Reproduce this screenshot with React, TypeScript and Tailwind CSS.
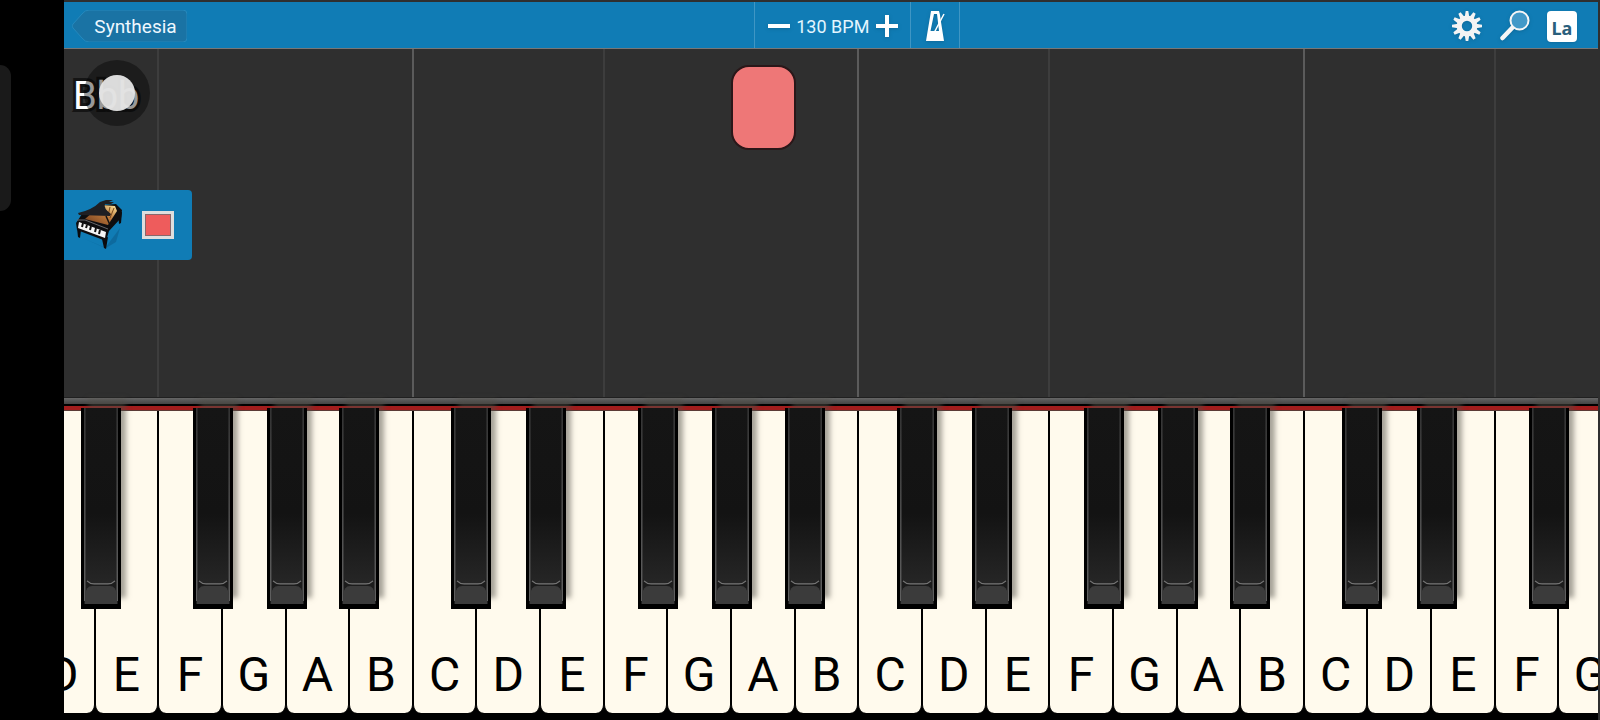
import React, { useState } from 'react';

interface KeyInfo {
  note: string;
  black?: string;
}

// position of the black key that overlaps the right edge of each white key
const BLACK: Record<string, string> = {
  C: '-right-[16px]',
  D: '-right-[27px]',
  F: '-right-[12px]',
  G: '-right-[22px]',
  A: '-right-[31px]',
};

const NOTES = 'DEFGABCDEFGABCDEFGABCDEFG'.split('');
const KEYS: KeyInfo[] = NOTES.map((note) => ({ note, black: BLACK[note] }));
const ACTIVE_KEY = 11;

const laneBorder: Record<string, string> = {
  B: 'border-r-2 border-[#5b5b5b]',
  E: 'border-r-2 border-[#3d3d3d]',
};

function MetronomeIcon() {
  return (
    <svg className="h-8 w-5 drop-shadow" viewBox="0 0 20 32">
      <path fill="#fff" fillRule="evenodd" d="M6 1h8l1 4 1 7 3 19H1L6 1zm3 3L5.500 21h8.500L12.500 8 12 4z" />
      <path stroke="#fff" strokeWidth="1.500" d="M9.500 22L19 4" />
    </svg>
  );
}

function GearIcon() {
  const teeth = Array.from({ length: 12 }, (_, i) => i * 30);
  return (
    <svg className="h-8 w-8 drop-shadow" viewBox="-16 -16 32 32">
      <circle r="7.800" fill="none" stroke="#f4f4f4" strokeWidth="5.200" />
      {teeth.map((angle) => (
        <path key={angle} d="M-2.300 -9L-1.300 -15H1.300L2.300 -9z" fill="#f4f4f4" transform={`rotate(${angle})`} />
      ))}
    </svg>
  );
}

function SearchIcon() {
  return (
    <svg className="h-8 w-8 drop-shadow" viewBox="0 0 32 32">
      <path d="M3.500 28L14 17" stroke="#f6f6f6" strokeWidth="4.500" strokeLinecap="round" />
      <circle cx="20.500" cy="10.500" r="9" fill="#4299c8" stroke="#f6f6f6" strokeWidth="2" />
    </svg>
  );
}

function PianoIcon() {
  return (
    <svg className="h-13 w-12" viewBox="0 0 48 52">
      <defs>
        <linearGradient id="wood" x1="0" y1="1" x2="1" y2="0">
          <stop offset="0" stopColor="#6e3a1c" />
          <stop offset="0.550" stopColor="#b9763a" />
          <stop offset="1" stopColor="#ffe9a0" />
        </linearGradient>
      </defs>
      <path d="M10 40l20 9 15-20-4 14-10 6z" fill="#0a4f7c" opacity="0.400" />
      <path d="M2 29l1 9 2 1 1-8zM27 40l2 9 2 1 2-12zM43 14l1 11 2-1 1-11z" fill="#0b0b0d" />
      <path d="M1 24L7 15 28 6 41 5 47 11 46 19 34 32 31 42 2 31z" fill="#0d0d0f" />
      <path d="M10 20L26 6 40 7 42 12 33 26z" fill="url(#wood)" />
      <path d="M35 8l-2 9M39 9l-4 10" stroke="#7a4a1e" strokeWidth="1" />
      <path d="M3 14Q17 11 25 3L31 1H38L34 3H39L36 5H30Q28 9 36 15L35 17 4 16z" fill="#1f1f23" />
      <path d="M31 17l4 9" stroke="#111" strokeWidth="1.500" />
      <path d="M4 23l27 10-1 6L3 29z" fill="#f5f5f5" />
      <path d="M8 24l-1 4M12 26l-1 3M16 27l-1 4M21 29l-1 4M25 31l-1 4" stroke="#111" strokeWidth="2" />
      <path d="M2 21L10 21 33 30" stroke="#66666a" strokeWidth="1" fill="none" />
    </svg>
  );
}

function BlackKey({ className }: { className: string }) {
  return (
    <span
      className={`absolute -top-[3px] z-10 h-[201px] w-10 bg-black shadow-[6px_-10px_5px_-1px_rgba(80,78,70,0.5)] ${className}`}
    >
      <svg className="block h-full w-full" viewBox="0 0 40 200" preserveAspectRatio="none">
        <defs>
          <linearGradient id="keyFace" x1="0" y1="0" x2="0" y2="1">
            <stop offset="0" stopColor="#151515" />
            <stop offset="0.600" stopColor="#131313" />
            <stop offset="1" stopColor="#262626" />
          </linearGradient>
          <linearGradient id="keyRim" x1="0" y1="0" x2="0" y2="1">
            <stop offset="0" stopColor="#333" />
            <stop offset="1" stopColor="#606060" />
          </linearGradient>
        </defs>
        <rect width="40" height="200" fill="#000" />
        <path d="M3 0H37V195H3z" fill="#1c1c1c" />
        <path d="M3 0H4.500V192H3zM35.500 0H37V192H35.500z" fill="url(#keyRim)" />
        <path d="M5 0H35V168Q35 175 29 175H11Q5 175 5 168z" fill="url(#keyFace)" />
        <path d="M4 195V186Q5 177 11 177H29Q35 177 36 186V195z" fill="#3b3b3b" />
        <path d="M6 172Q9 175 13 175H27Q31 175 34 172" stroke="#777" strokeWidth="1.200" fill="none" />
      </svg>
    </span>
  );
}

export default function App() {
  const [bpm, setBpm] = useState(130);

  return (
    <div className="flex h-screen overflow-hidden bg-black font-[Roboto,sans-serif]">
      <aside className="w-16 shrink-0 pt-[65px]">
        <div className="h-[146px] w-[11px] rounded-r-xl bg-[#1a1a1a]" />
      </aside>

      <main className="flex min-w-0 flex-1 flex-col overflow-hidden border-t-2 border-r-2 border-[#2f2f2f]">
        {/* Toolbar */}
        <header className="grid h-[47px] shrink-0 grid-cols-[45%_auto_1fr] border-b border-[#777] bg-[#107cb5] text-white">
          <div className="flex items-center pt-0.5 pl-2">
            <button type="button" className="relative h-8 w-[115px] pt-0.5 pl-3 text-[19px] leading-7 text-[#eef8ff]">
              <svg className="absolute inset-0 h-full w-full" viewBox="0 0 115 32" preserveAspectRatio="none">
                <path
                  d="M17 0H111Q115 0 115 4V28Q115 32 111 32H17Q13 32 10 28L1 18Q-1 16 1 14L10 4Q13 0 17 0z"
                  fill="#1a73a4"
                  stroke="#2589bd"
                />
              </svg>
              <span className="relative">Synthesia</span>
            </button>
          </div>

          <div className="flex border-x border-[#3f96c4]">
            <div className="flex w-[155px] items-center justify-center gap-1 pt-0.5">
              <button type="button" aria-label="Slower" onClick={() => setBpm(bpm - 1)}>
                <svg className="h-6 w-6 drop-shadow" viewBox="0 0 24 24">
                  <path d="M1 12H23" stroke="#fff" strokeWidth="4" />
                </svg>
              </button>
              <span className="w-[76px] pt-0.5 text-center text-lg whitespace-nowrap text-[#e4f6ff]">{bpm} BPM</span>
              <button type="button" aria-label="Faster" onClick={() => setBpm(bpm + 1)}>
                <svg className="h-6 w-6 drop-shadow" viewBox="0 0 24 24">
                  <path d="M1 12H23M12 1V23" stroke="#fff" strokeWidth="4" />
                </svg>
              </button>
            </div>
            <button
              type="button"
              aria-label="Metronome"
              className="flex w-[49px] items-center justify-center border-l border-[#3f96c4] pt-0.5"
            >
              <MetronomeIcon />
            </button>
          </div>

          <div className="flex items-center justify-end gap-4 pt-0.5 pr-[21px]">
            <button type="button" aria-label="Settings">
              <GearIcon />
            </button>
            <button type="button" aria-label="Zoom">
              <SearchIcon />
            </button>
            <button
              type="button"
              className="h-[31px] w-[30px] rounded-sm bg-white pt-1 font-['Noto_Sans',sans-serif] text-lg leading-6 font-bold text-[#2a5f7c] shadow"
            >
              La
            </button>
          </div>
        </header>

        {/* Falling notes */}
        <section className="relative min-h-0 flex-1 overflow-hidden bg-[#2f2f2f]">
          <div className="-ml-[33px] grid h-full w-[calc(100%+57px)] grid-cols-25">
            {KEYS.map((key, i) => (
              <div key={i} className={`-mr-px ${laneBorder[key.note] ?? ''}`}>
                {i === ACTIVE_KEY && (
                  <div className="mt-4 h-[85px] rounded-[18px] border-2 border-[#2a1719] bg-[#ee7777]" />
                )}
              </div>
            ))}
          </div>

          <div className="absolute top-[25px] left-[9px] text-[38px] leading-11 text-white [paint-order:stroke] [-webkit-text-stroke:6px_#151515]">
            Bbb
          </div>
          <div className="absolute top-[11px] left-5 flex size-[66px] items-center justify-center rounded-full bg-black/40">
            <div className="size-9 rounded-full bg-[#e6e6e6]/95" />
          </div>

          <div className="absolute top-[141px] left-0 flex h-[70px] w-32 items-center gap-[19px] rounded-r-sm bg-[#107cb5] pl-[11px]">
            <PianoIcon />
            <button
              type="button"
              aria-label="Track colour"
              className="h-7 w-8 border-3 border-[#dedede] bg-[#ee5c5c] inset-ring inset-ring-[#87686c]"
            />
          </div>
        </section>

        {/* Keyboard */}
        <section className="shrink-0 bg-black pb-[7px]">
          <div className="h-[9px] border-t border-b-2 border-t-[#202020] border-b-black bg-linear-to-b from-[#666] to-[#444]" />
          <div className="h-[5px] border-b border-[#5b3a36] bg-[#a31d1d]" />
          <div className="-ml-[33px] grid h-[302px] w-[calc(100%+57px)] grid-cols-25">
            {KEYS.map((key, i) => (
              <button
                key={i}
                type="button"
                className="relative flex items-end justify-center rounded-b-lg border-x border-black bg-[#fffaed] pb-2 text-5xl leading-[60px] text-black"
              >
                {key.note}
                {key.black && <BlackKey className={key.black} />}
              </button>
            ))}
          </div>
        </section>
      </main>
    </div>
  );
}
